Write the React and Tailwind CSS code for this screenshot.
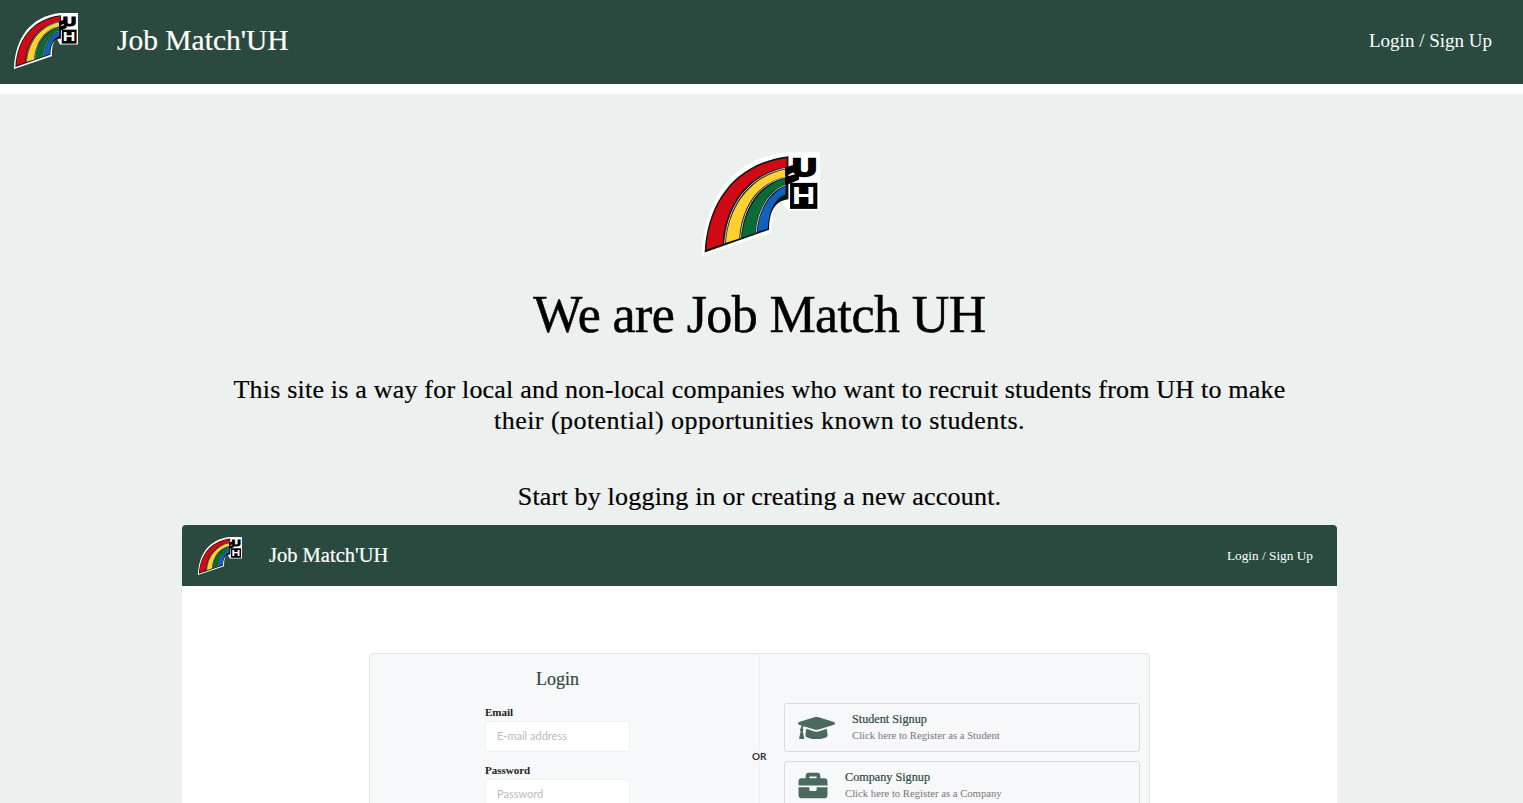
import { FaGraduationCap, FaBriefcase } from 'react-icons/fa'

const serif = { fontFamily: '"Liberation Serif", serif' }
const lato = { fontFamily: 'Lato, sans-serif' }
const sans = { fontFamily: '"Liberation Sans", sans-serif' }

// UH rainbow logo, drawn on the 420x345 grid of the big one
const Logo = ({ className }) => (
  <svg viewBox="30 15 355 320" preserveAspectRatio="none" className={className}>
    <path d="M30 335 C35 160 120 35 285 15 L385 15 L385 195 L285 195 L270 165 C245 175 240 215 240 262 Z" fill="#fff" />
    <path d="M38 324 C46 168 130 48 290 28 L290 160 C245 165 232 205 232 254 Z" fill="#111" />
    <path d="M43 315 C52 172 132 55 285 34 L285 61 C172 78 100 172 92 298 Z" fill="#cf0a14" />
    <path d="M102 294 C110 182 176 90 282 68 L282 90 C202 106 148 180 142 281 Z" fill="#fdd130" />
    <path d="M150 278 C156 192 206 116 280 96 L280 116 C232 130 196 190 190 265 Z" fill="#0b6b37" />
    <path d="M197 260 C201 196 236 138 282 120 L280 146 C246 160 230 200 228 251 Z" fill="#0f62c0" />
    <path d="M98 296 C106 178 172 86 284 64" fill="none" stroke="#ccc" strokeWidth="3" />
    <path d="M146 280 C152 186 202 110 282 92" fill="none" stroke="#ccc" strokeWidth="3" />
    <path d="M193 263 C198 192 234 132 282 117" fill="none" stroke="#ccc" strokeWidth="3" />
    <path d="M280 62 L322 50 L322 68 L280 90 Z M280 92 L322 80 L322 100 L280 118 Z" fill="#000" />
    <text x="302" y="90" textLength="72" lengthAdjust="spacingAndGlyphs" fontSize="74" fontWeight="700" fill="#000" stroke="#000" strokeWidth="7" style={sans}>U</text>
    <rect x="295" y="110" width="82" height="80" fill="#000" />
    <text x="301" y="176" textLength="70" lengthAdjust="spacingAndGlyphs" fontSize="74" fontWeight="700" fill="#fff" style={sans}>H</text>
  </svg>
)

const SignupCard = ({ icon, title, text }) => (
  <div className="flex h-[49px] w-[356px] shrink-0 items-center gap-[17px] rounded-[3px] border border-[#d9dcdf] bg-[#f7f8f9] pl-[13px]">
    {icon}
    <div className="mt-[-2px]" style={serif}>
      <p className="text-[12.2px] leading-[16px] text-[#2b4a3f] [-webkit-text-stroke:0.2px]">{title}</p>
      <p className="text-[10.7px] leading-[16px] text-[#777]">{text}</p>
    </div>
  </div>
)

const Field = ({ label, placeholder, className }) => (
  <div className={className}>
    <label className="block text-[11px] font-bold leading-[17px] text-[#222]">{label}</label>
    <div className="flex h-[31px] items-center rounded-[3px] border border-[#eef0f1] bg-white pl-[11px] text-[11px] text-[#bbb]" style={lato}>{placeholder}</div>
  </div>
)

export default function App() {
  return (
    <div className="h-screen overflow-hidden bg-white" style={serif}>
      <nav className="flex h-[84px] items-center bg-[#2b4a3f] pb-[2px] text-white">
        <Logo className="ml-[14px] h-[56px] w-[64px]" />
        <span className="ml-[39px] mt-[-2px] text-[29.5px] [-webkit-text-stroke:0.2px]">Job Match'UH</span>
        <a className="ml-auto mr-[31px] text-[19px]">Login / Sign Up</a>
      </nav>

      <main className="mt-[10px] h-full bg-[#ecf0ef] pr-1 pt-[58px] text-center text-black">
        <div className="flex justify-center pl-[3px]">
          <Logo className="h-[104px] w-[118px]" />
        </div>
        <h1 className="mt-[29px] text-[52px] leading-[60px] tracking-[-0.6px] [-webkit-text-stroke:0.5px]">We are Job Match UH</h1>
        <p className="mx-auto mt-[29px] w-[1080px] text-[26px] leading-[31px] tracking-[0.2px] [-webkit-text-stroke:0.2px]">
          This site is a way for local and non-local companies who want to recruit students from UH to make <span className="tracking-[0.45px]">their (potential) opportunities known to students.</span>
        </p>
        <p className="mt-[45px] text-[26px] leading-[31px] tracking-[0.2px] [-webkit-text-stroke:0.2px]">Start by logging in or creating a new account.</p>

        {/* screenshot of the login page inside the landing page */}
        <div className="mx-auto mt-[13px] w-[1155px] rounded-t-[4px] bg-white text-left">
          <div className="flex h-[61px] items-center rounded-t-[4px] bg-[#2b4a3f] text-white">
            <Logo className="ml-[16px] h-[38px] w-[44px]" />
            <span className="ml-[27px] text-[20.5px] [-webkit-text-stroke:0.2px]">Job Match'UH</span>
            <a className="ml-auto mr-[24px] text-[13.3px]">Login / Sign Up</a>
          </div>
          <div className="px-[187px] pt-[67px]">
            <div className="flex h-[300px] w-[781px] rounded-[4px] border border-[#e3e5e7] bg-[#f7f8f9]">
              <div className="flex w-[390px] flex-col items-center border-r border-[#e9ebed] pr-[14px]">
                <h2 className="mt-[13px] text-[18px] leading-[24px] text-[#2b4a3f] [-webkit-text-stroke:0.2px]">Login</h2>
                <div className="mt-[13px] w-[145px]">
                  <Field label="Email" placeholder="E-mail address" />
                  <Field className="mt-[10px]" label="Password" placeholder="Password" />
                </div>
              </div>
              <div className="relative flex flex-col gap-[9px] pl-[24px] pt-[49px]">
                <span className="absolute left-[-8px] top-[96px] bg-[#f7f8f9] text-[10px] font-bold leading-[12px] text-[#333]" style={lato}>OR</span>
                <SignupCard
                  icon={<FaGraduationCap className="h-[30px] w-[37px] text-[#4a6a5f]" />}
                  title="Student Signup"
                  text="Click here to Register as a Student"
                />
                <SignupCard
                  icon={<FaBriefcase className="h-[29px] w-[30px] text-[#4a6a5f]" />}
                  title="Company Signup"
                  text="Click here to Register as a Company"
                />
              </div>
            </div>
          </div>
        </div>
      </main>
    </div>
  )
}
